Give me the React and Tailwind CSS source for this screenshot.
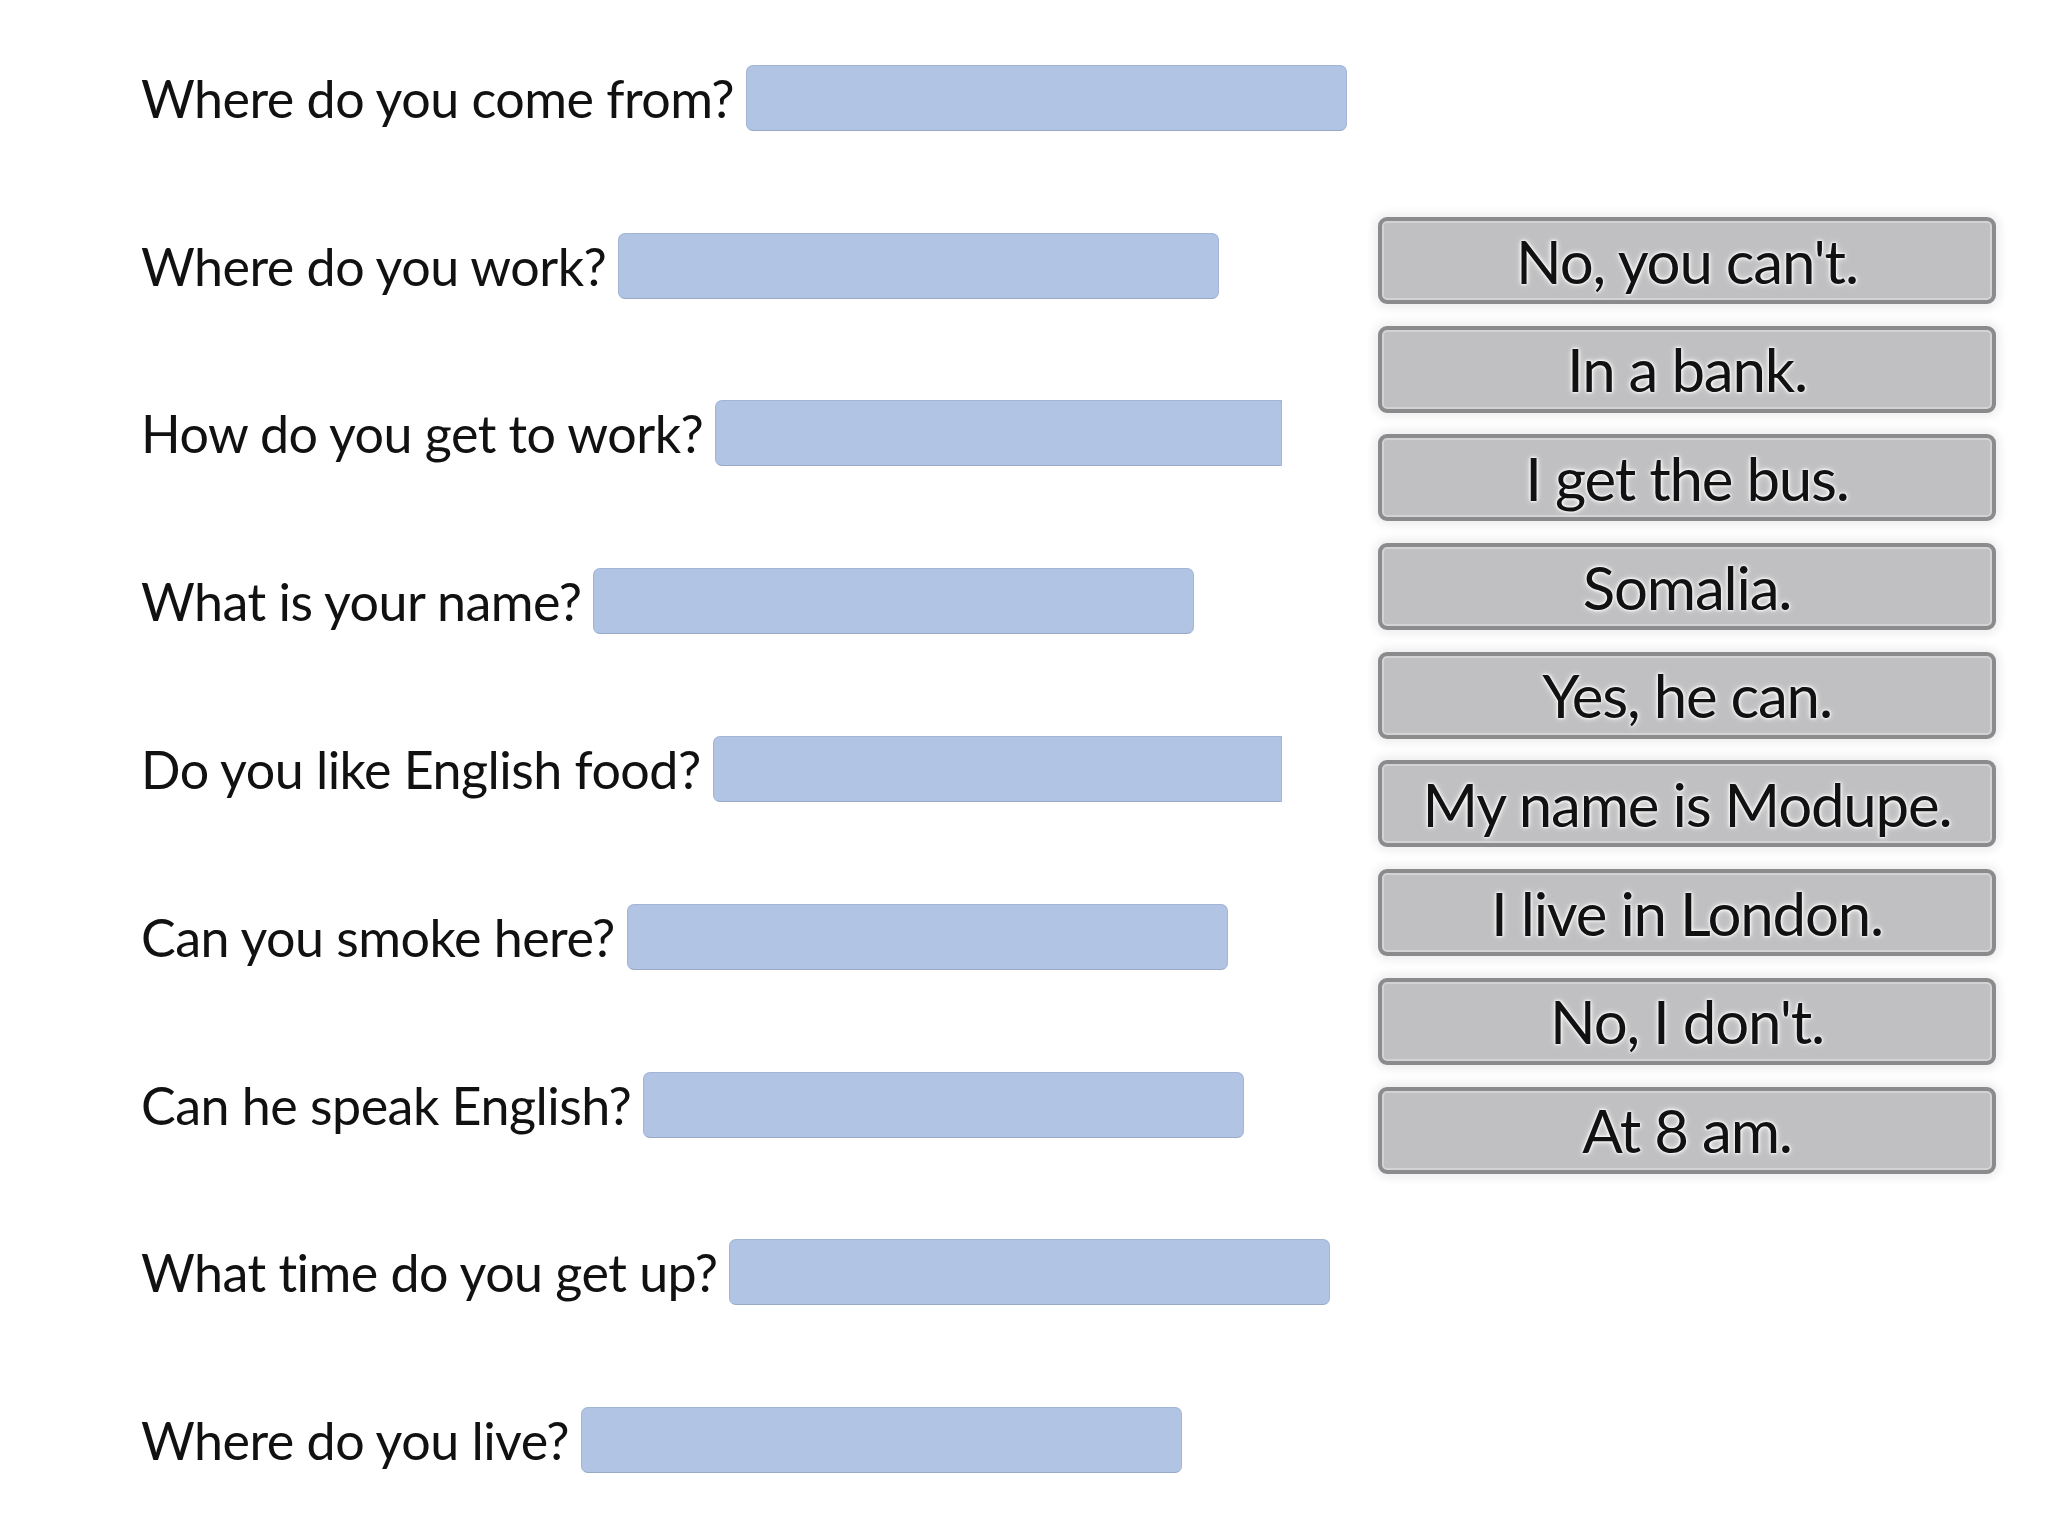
import React from 'react';

const questions = [
  { text: 'Where do you come from?', cut: false },
  { text: 'Where do you work?', cut: false },
  { text: 'How do you get to work?', cut: true },
  { text: 'What is your name?', cut: false },
  { text: 'Do you like English food?', cut: true },
  { text: 'Can you smoke here?', cut: false },
  { text: 'Can he speak English?', cut: false },
  { text: 'What time do you get up?', cut: false },
  { text: 'Where do you live?', cut: false },
];

const answers = [
  "No, you can't.",
  'In a bank.',
  'I get the bus.',
  'Somalia.',
  'Yes, he can.',
  'My name is Modupe.',
  'I live in London.',
  "No, I don't.",
  'At 8 am.',
];

const App = () => {
  return (
    <div className="w-[2048px] h-[1536px] bg-white flex font-['Lato',sans-serif] text-[#111]">
      {/* questions with the blue drop boxes */}
      <div className="w-[1378px] pl-[141px] pt-[14px] flex flex-col">
        {questions.map((q, i) => (
          <div key={i} className="h-[167.8px] flex items-center">
            <span className="text-[52px] leading-none tracking-[-0.01em] whitespace-nowrap">{q.text}</span>
            {q.cut ? (
              <div className="ml-[12px] flex-1 h-[66px] bg-[#b1c4e3] border border-[#a3b5d6] border-b-[#97a8c8] rounded-l-[7px] mr-[96px]" />
            ) : (
              <div className="ml-[12px] w-[601px] h-[66px] bg-[#b1c4e3] border border-[#a3b5d6] border-b-[#97a8c8] rounded-[7px] shrink-0" />
            )}
          </div>
        ))}
      </div>

      {/* answer tiles */}
      <div className="w-[618px] pt-[217px] flex flex-col gap-[21.7px]">
        {answers.map((a, i) => (
          <div
            key={i}
            className="h-[87px] bg-[#c0bfc2] border-[4px] border-[#8b8b8d] rounded-[9px] shadow-[0_0_10px_4px_rgba(0,0,0,0.07),inset_0_0_0_2px_#d3d3d5] flex items-center justify-center"
          >
            <span className="text-[60px] leading-none tracking-[-0.02em] whitespace-nowrap [text-shadow:0_0_3px_#fff,0_0_3px_#fff,0_0_6px_#fff]">
              {a}
            </span>
          </div>
        ))}
      </div>
    </div>
  );
};

export default App;
